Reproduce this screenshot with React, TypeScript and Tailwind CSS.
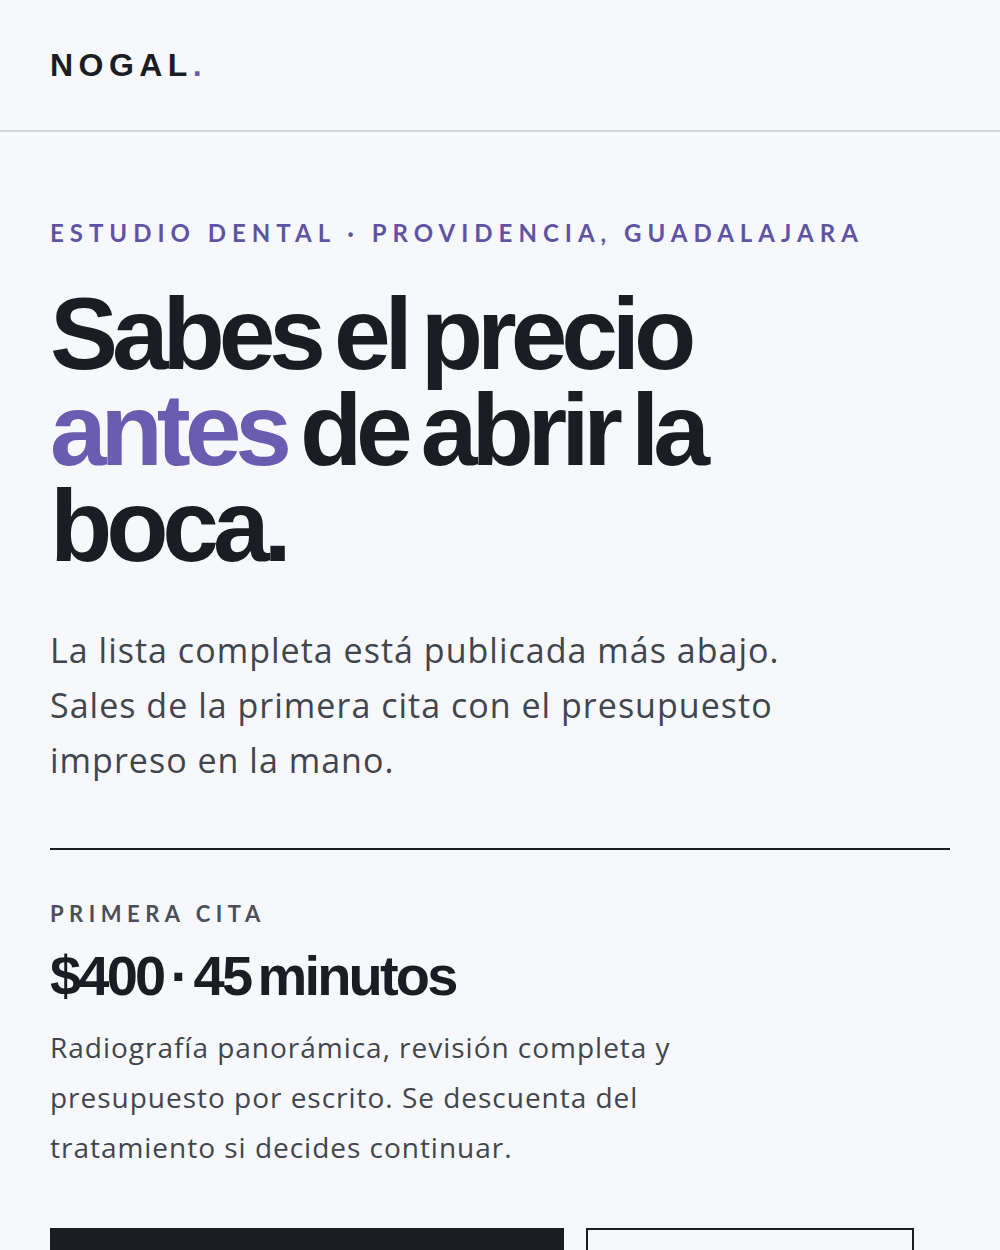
import React from "react";

export default function App() {
  return (
    <div className="min-h-[1250px] bg-[#f7f8fb] text-[#1b1d22]">
      <header className="h-[132px] border-b-2 border-[#d6d7db] flex items-center px-[50px]">
        <div className="font-['Liberation_Sans',sans-serif] font-bold text-[32px] tracking-[0.17em] text-[#1b1d22]">
          NOGAL<span className="text-[#6a5cb0]">.</span>
        </div>
      </header>
      <main className="px-[50px] pt-[86px]">
        <p className="font-['Lato',sans-serif] font-bold text-[24px] leading-[30px] tracking-[0.25em] text-[#5f54a4]">
          ESTUDIO DENTAL · PROVIDENCIA, GUADALAJARA
        </p>
        <h1 className="mt-[38px] font-['Liberation_Sans',sans-serif] font-bold text-[102px] leading-[96px] tracking-[-0.06em] [word-spacing:-0.08em] text-[#1b1d22]">
          Sabes el precio
          <br />
          <span className="text-[#6a5cb0]">antes</span> de abrir la
          <br />
          boca.
        </h1>
        <p className="mt-[49px] font-['Open_Sans',sans-serif] text-[34px] leading-[55px] tracking-[0.03em] text-[#41454d] max-w-[770px]">
          La lista completa está publicada más abajo. Sales de la primera cita con el presupuesto impreso en la mano.
        </p>
        <div className="mt-[60px] max-w-[900px] border-t-2 border-[#1b1d22]" />
        <p className="mt-[50px] font-['Lato',sans-serif] font-bold text-[22px] leading-[28px] tracking-[0.25em] text-[#4b4f58]">
          PRIMERA CITA
        </p>
        <p className="mt-[18px] font-['Liberation_Sans',sans-serif] font-bold text-[56px] leading-[60px] tracking-[-0.05em] [word-spacing:-0.1em] text-[#1b1d22]">
          $400 · 45 minutos
        </p>
        <p className="mt-[16px] font-['Open_Sans',sans-serif] text-[28px] leading-[50px] tracking-[0.035em] text-[#41454d] max-w-[660px]">
          Radiografía panorámica, revisión completa y presupuesto por escrito. Se descuenta del tratamiento si decides continuar.
        </p>
        <div className="mt-[56px] flex gap-[22px]">
          <button className="w-[514px] h-[64px] bg-[#1b1d22]" />
          <button className="w-[328px] h-[64px] border-2 border-[#1b1d22]" />
        </div>
      </main>
    </div>
  );
}
